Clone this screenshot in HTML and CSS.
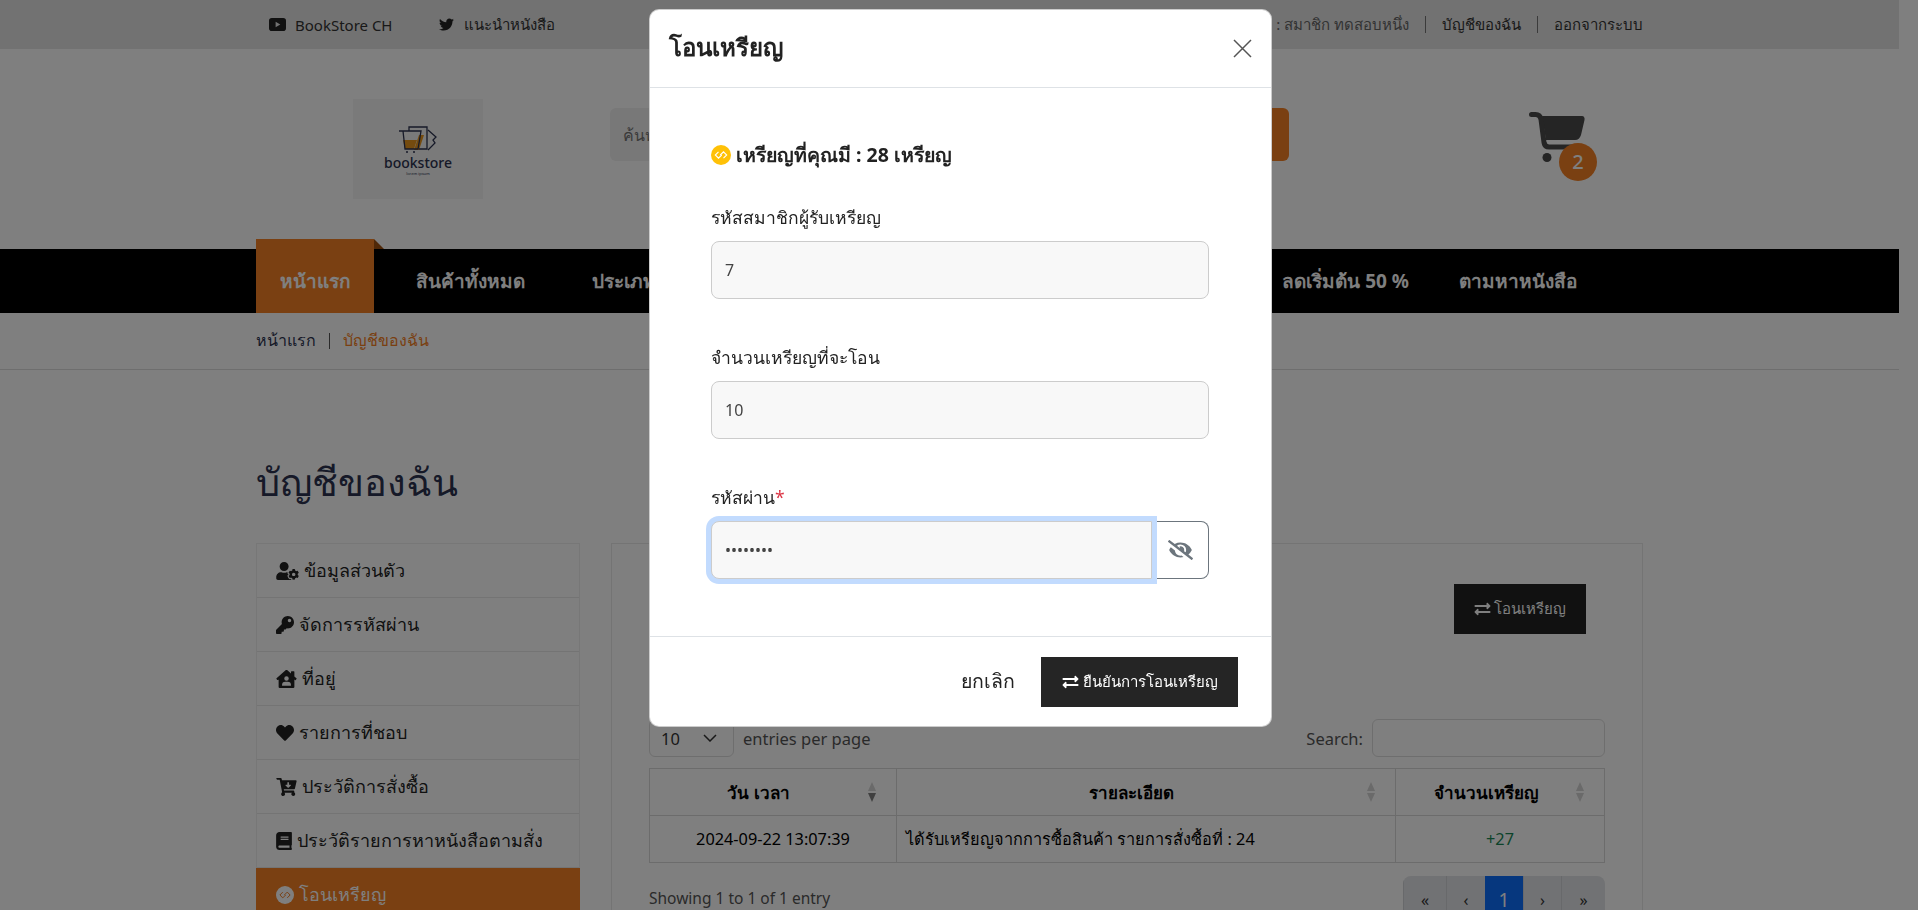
FILE: index.html
```html
<!DOCTYPE html>
<html lang="th">
<head>
    <meta charset="UTF-8">
    <meta name="viewport" content="width=device-width, initial-scale=1.0">
    <title>บัญชีของฉัน</title>
    <link rel="stylesheet" href="styles.css">
</head>
<body>
    <svg class="icon-defs" aria-hidden="true">
        <symbol id="i-exchange" viewBox="0 0 512 512"><path d="M0 168v-16c0-13 11-24 24-24h360V80c0-21 26-32 41-17l80 80c9 9 9 25 0 34l-80 80c-15 15-41 4-41-17v-48H24c-13 0-24-11-24-24zm488 152H128v-48c0-21-26-32-41-17L7 335c-9 9-9 25 0 34l80 80c15 15 41 5 41-17v-48h360c13 0 24-11 24-24v-16c0-13-11-24-24-24z"/></symbol>
        <symbol id="i-coin" viewBox="0 0 20 20"><circle cx="10" cy="10" r="10" fill="currentColor"/><path d="M7.500 6.800 4.300 10l3.200 3.200 3.200-3.200M12.500 13.200 15.700 10l-3.200-3.200L9.300 10" fill="none" stroke="var(--coin-mark)" stroke-width="1.100"/></symbol>
    </svg>

    <div class="page">
        <div class="topbar">
            <div class="container topbar-inner">
                <a class="top-link">
                    <svg class="top-icon" viewBox="0 0 18 14"><path d="M3 0h12a3 3 0 0 1 3 3v8a3 3 0 0 1-3 3H3a3 3 0 0 1-3-3V3a3 3 0 0 1 3-3zm4 4v6l5-3z" fill-rule="evenodd"/></svg>
                    BookStore CH
                </a>
                <a class="top-link top-link-tw">
                    <svg class="top-icon" viewBox="0 0 512 512"><path d="M459 152c0 5 0 9 0 14 0 139-106 299-299 299-59 0-115-17-161-47 8 1 16 1 25 1 49 0 94-17 130-45-46-1-85-31-98-73 7 1 13 2 20 2 9 0 19-1 28-4-48-10-84-52-84-103v-1c14 8 30 13 47 13-28-19-47-51-47-87 0-19 5-37 14-53 52 64 129 105 216 110-2-8-3-16-3-24 0-58 47-105 105-105 30 0 57 13 77 33 24-5 46-14 67-26-8 24-25 45-46 58 21-2 41-8 60-16-14 21-32 39-52 54z"/></svg>
                    แนะนำหนังสือ
                </a>
                <div class="top-right">
                    <span class="top-member">สวัสดี : สมาชิก ทดสอบหนึ่ง</span>
                    <a class="top-sep">บัญชีของฉัน</a>
                    <a class="top-sep">ออกจากระบบ</a>
                </div>
            </div>
        </div>

        <header class="site-header">
            <div class="container header-inner">
                <div class="logo">
                    <svg class="logo-mark" viewBox="0 0 38 27">
                        <path d="M4 14h14l-3 9H6z" fill="#e8971f"/>
                        <path d="M20 9h5l-5 15h-5z" fill="#e8971f"/>
                        <path d="M10 5V1h18v22H20" fill="none" stroke="#2c3350" stroke-width="1.300"/>
                        <path d="M29 4l8 7-3 3 2 3-7 7" fill="none" stroke="#2c3350" stroke-width="1.300"/>
                        <path d="M0 5h22l-3 18H6L4 5" fill="none" stroke="#2c3350" stroke-width="1.300"/>
                        <circle cx="8" cy="26" r="1" fill="#2c3350"/><circle cx="15" cy="26" r="1" fill="#2c3350"/>
                    </svg>
                    <div class="logo-name">bookstore</div>
                    <div class="logo-tag">lorem ipsum</div>
                </div>
                <div class="search">
                    <input class="search-input" type="text" placeholder="ค้นหาหนังสือ">
                    <button class="search-btn" type="button">ค้นหา</button>
                </div>
                <div class="cart">
                    <svg class="cart-icon" viewBox="0 0 56 50">
                        <path d="M13 4h40c2 0 3 2 2.500 4l-3.500 15c-1 3-3 5-6 5H17z"/>
                        <path d="M2.500 2.500h4c3 0 5 2 5.500 5l3 23c.5 3 2 4.500 5 4.500h26" fill="none" stroke="currentColor" stroke-width="5" stroke-linecap="round"/>
                        <circle cx="18" cy="45.500" r="4.500"/>
                    </svg>
                    <span class="cart-count">2</span>
                </div>
            </div>
        </header>

        <nav class="main-nav">
            <div class="container nav-inner">
                <a class="nav-item nav-active">หน้าแรก</a>
                <a class="nav-item">สินค้าทั้งหมด</a>
                <a class="nav-item">ประเภทหนังสือ</a>
                <a class="nav-item nav-end nav-push">ลดเริ่มต้น 50 %</a>
                <a class="nav-item nav-end">ตามหาหนังสือ</a>
            </div>
        </nav>

        <div class="breadcrumb">
            <div class="container crumbs">
                <a>หน้าแรก</a>
                <span class="crumb-bar"></span>
                <a class="crumb-current">บัญชีของฉัน</a>
            </div>
        </div>

        <main class="container account">
            <h1 class="account-title">บัญชีของฉัน</h1>
            <div class="account-body">
                <ul class="side-menu">
                    <li><svg class="side-icon icon-user" viewBox="0 0 640 512"><path d="M610.500 373.300c2.600-14.100 2.600-28.500 0-42.600l25.800-14.900c3-1.700 4.300-5.200 3.300-8.500-6.700-21.600-18.200-41.200-33.200-57.400-2.300-2.500-6-3.100-9-1.400l-25.800 14.900c-10.900-9.300-23.400-16.500-36.900-21.300v-29.800c0-3.400-2.400-6.400-5.700-7.100-22.300-5-45-4.800-66.200 0-3.300.7-5.700 3.700-5.700 7.100v29.800c-13.500 4.800-26 12-36.900 21.300l-25.800-14.900c-2.900-1.700-6.700-1.100-9 1.400-15 16.200-26.500 35.800-33.200 57.400-1 3.300.4 6.800 3.300 8.500l25.800 14.900c-2.600 14.100-2.600 28.500 0 42.600l-25.800 14.900c-3 1.700-4.300 5.200-3.300 8.500 6.700 21.600 18.200 41.100 33.200 57.400 2.300 2.500 6 3.100 9 1.400l25.800-14.900c10.900 9.300 23.400 16.500 36.900 21.300v29.800c0 3.400 2.400 6.400 5.700 7.100 22.300 5 45 4.800 66.200 0 3.300-.7 5.700-3.700 5.700-7.100v-29.800c13.500-4.800 26-12 36.900-21.300l25.800 14.900c2.900 1.700 6.700 1.100 9-1.400 15-16.200 26.500-35.800 33.200-57.400 1-3.300-.4-6.800-3.300-8.500l-25.800-14.900zM496 400.500c-26.800 0-48.500-21.800-48.500-48.500s21.800-48.500 48.500-48.500 48.500 21.800 48.500 48.500-21.700 48.500-48.500 48.500zM224 256c70.700 0 128-57.300 128-128S294.700 0 224 0 96 57.300 96 128s57.300 128 128 128zm201.200 226.500c-2.300-1.200-4.600-2.600-6.800-3.900l-7.900 4.600c-6 3.400-12.800 5.300-19.600 5.300-10.900 0-21.400-4.600-28.900-12.600-18.300-19.800-32.300-43.900-40.200-69.600-5.500-17.700 1.900-36.400 17.900-45.700l7.900-4.600c-.1-2.600-.1-5.200 0-7.800l-7.900-4.600c-16-9.200-23.400-28-17.900-45.700.9-2.900 2.200-5.800 3.200-8.700-3.800-.3-7.500-1.200-11.400-1.200h-16.700c-22.200 10.200-46.900 16-72.900 16s-50.600-5.800-72.900-16h-16.700C60.200 288 0 348.200 0 422.400V464c0 26.500 21.500 48 48 48h352c10.100 0 19.500-3.200 27.200-8.500-1.200-3.800-2-7.700-2-11.800v-9.200z"/></svg>ข้อมูลส่วนตัว</li>
                    <li><svg class="side-icon icon-square" viewBox="0 0 512 512"><path d="M512 176c0 97.200-78.800 176-176 176-11.200 0-22.200-1.100-32.800-3.100l-24 27A24 24 0 0 1 261.200 384H224v40c0 13.300-10.700 24-24 24h-40v40c0 13.300-10.700 24-24 24H24c-13.300 0-24-10.700-24-24v-78.100c0-6.400 2.500-12.500 7-17l161.800-161.800C163.100 213.800 160 195.300 160 176 160 78.800 238.800 0 336 0c97.500 0 176 78.500 176 176zM336 128c0 26.500 21.500 48 48 48s48-21.500 48-48-21.500-48-48-48-48 21.500-48 48z"/></svg>จัดการรหัสผ่าน</li>
                    <li><svg class="side-icon icon-house" viewBox="0 0 576 512"><path d="M570.700 236.300 512 184.400V48a16 16 0 0 0-16-16h-64a16 16 0 0 0-16 16v51.700L314.800 10.300C308.500 4.600 296.500 0 288 0s-20.500 4.600-26.700 10.300L5.300 236.300A16.200 16.200 0 0 0 0 248a18 18 0 0 0 4.100 10.700l21.400 23.800a21 21 0 0 0 12 5.300 21.700 21.700 0 0 0 10.700-4.100l15.900-14V480a32 32 0 0 0 32 32H480a32 32 0 0 0 32-32V269.900l15.900 14a22 22 0 0 0 10.700 4.100 21 21 0 0 0 11.900-5.300l21.400-23.800A21.600 21.600 0 0 0 576 248a21.700 21.700 0 0 0-5.300-11.700zM288 176a64 64 0 1 1-64 64 64 64 0 0 1 64-64zm112 272H176a16 16 0 0 1-16-16 96 96 0 0 1 96-96h64a96 96 0 0 1 96 96 16 16 0 0 1-16 16z"/></svg>ที่อยู่</li>
                    <li><svg class="side-icon icon-square" viewBox="0 0 512 512"><path d="M462.300 62.600C407.500 15.900 326 24.300 275.700 76.200L256 96.500l-19.700-20.300C186.100 24.300 104.500 15.900 49.700 62.600c-62.800 53.600-66.100 149.800-9.900 207.900l193.500 199.800c12.500 12.900 32.800 12.900 45.300 0l193.500-199.800c56.300-58.100 53-154.300-9.800-207.900z"/></svg>รายการที่ชอบ</li>
                    <li><svg class="side-icon icon-cart" viewBox="0 0 576 512"><path d="M504.700 320H211.600l6.500 32h268.400c15.400 0 26.800 14.300 23.400 29.300l-5.500 24.300C523.100 414.700 536 433.800 536 456c0 31.200-25.500 56.600-56.800 56-29.800-.5-54.300-24.700-55.100-54.400-.5-16.300 6-31 16.800-41.600H231.100c10.400 10.300 16.900 24.500 16.900 40 0 31.800-26.500 57.400-58.700 55.900-28.500-1.300-51.700-24.400-53.200-52.900-1.200-22 10.400-41.400 28-51.600L94.400 48H24C10.700 48 0 37.300 0 24V8C0 3.600 10.700 0 24 0h102.500c11.400 0 21.200 8 23.500 19.200L159.200 64H552c15.400 0 26.800 14.300 23.400 29.300l-47.300 208c-2.500 10.900-12.200 18.700-23.400 18.700zM403 192h-43v-60c0-6.600-5.400-12-12-12h-24c-6.600 0-12 5.400-12 12v60h-43c-10.700 0-16 12.900-8.500 20.500l67 67c4.700 4.700 12.300 4.700 17 0l67-67c7.600-7.600 2.200-20.500-8.500-20.500z"/></svg>ประวัติการสั่งซื้อ</li>
                    <li><svg class="side-icon icon-book" viewBox="0 0 448 512"><path d="M448 360V24c0-13.300-10.700-24-24-24H96C43 0 0 43 0 96v320c0 53 43 96 96 96h328c13.300 0 24-10.700 24-24v-16c0-7.500-3.500-14.300-8.900-18.700-4.200-15.400-4.200-59.300 0-74.700 5.400-4.300 8.900-11.100 8.900-18.600zM128 134c0-3.300 2.700-6 6-6h212c3.300 0 6 2.700 6 6v20c0 3.300-2.700 6-6 6H134c-3.300 0-6-2.700-6-6v-20zm0 64c0-3.300 2.700-6 6-6h212c3.300 0 6 2.700 6 6v20c0 3.300-2.700 6-6 6H134c-3.300 0-6-2.700-6-6v-20zm253.400 250H96c-17.700 0-32-14.300-32-32 0-17.600 14.400-32 32-32h285.400c-1.900 17.100-1.900 46.900 0 64z"/></svg>ประวัติรายการหาหนังสือตามสั่ง</li>
                    <li class="side-active"><svg class="side-icon icon-square side-coin"><use href="#i-coin"/></svg>โอนเหรียญ</li>
                </ul>

                <section class="card">
                    <div class="card-actions">
                        <button class="dark-btn" type="button"><svg class="btn-icon"><use href="#i-exchange"/></svg>โอนเหรียญ</button>
                    </div>
                    <div class="dt-top">
                        <div class="dt-length">
                            <span class="dt-select">10<svg class="dt-chevron" viewBox="0 0 14 8"><path d="M1 1l6 6 6-6" fill="none" stroke="currentColor" stroke-width="1.500"/></svg></span>
                            <span>entries per page</span>
                        </div>
                        <div class="dt-search">
                            <span>Search:</span>
                            <span class="dt-search-box"></span>
                        </div>
                    </div>
                    <table class="dt-table">
                        <thead>
                            <tr>
                                <th class="col-date">วัน เวลา<span class="sort sort-down"></span></th>
                                <th>รายละเอียด<span class="sort"></span></th>
                                <th class="col-coin">จำนวนเหรียญ<span class="sort"></span></th>
                            </tr>
                        </thead>
                        <tbody>
                            <tr>
                                <td class="cell-center">2024-09-22 13:07:39</td>
                                <td>ได้รับเหรียญจากการซื้อสินค้า รายการสั่งซื้อที่ : 24</td>
                                <td class="cell-center cell-plus">+27</td>
                            </tr>
                        </tbody>
                    </table>
                    <div class="dt-bottom">
                        <span class="dt-info">Showing 1 to 1 of 1 entry</span>
                        <div class="pager">
                            <a>«</a><a>‹</a><a class="pager-on">1</a><a>›</a><a>»</a>
                        </div>
                    </div>
                </section>
            </div>
        </main>
    </div>

    <div class="backdrop"></div>

    <div class="modal">
        <div class="modal-head">
            <h2 class="modal-title">โอนเหรียญ</h2>
            <svg class="modal-close" viewBox="0 0 19 19"><path d="M1 1l17 17M18 1 1 18" fill="none" stroke="currentColor" stroke-width="1.500"/></svg>
        </div>
        <div class="modal-body">
            <p class="coin-line"><svg class="coin-icon"><use href="#i-coin"/></svg>เหรียญที่คุณมี : 28 เหรียญ</p>
            <label class="field-label">รหัสสมาชิกผู้รับเหรียญ</label>
            <input class="field-input" type="text" value="7">
            <label class="field-label">จำนวนเหรียญที่จะโอน</label>
            <input class="field-input" type="text" value="10">
            <label class="field-label">รหัสผ่าน<span class="req">*</span></label>
            <div class="pass-group">
                <input class="field-input pass-input" type="password" value="12345678">
                <span class="pass-eye">
                    <svg viewBox="0 0 640 512"><path d="M320 400c-75.850 0-137.250-58.710-142.900-133.110L72.200 185.820c-13.790 17.300-26.480 35.590-36.720 55.590a32.350 32.350 0 0 0 0 29.190C89.710 376.410 197.070 448 320 448c26.910 0 52.870-4 77.890-10.460L346 397.390a144.130 144.130 0 0 1-26 2.610zm313.820 58.100l-110.550-85.440a331.250 331.250 0 0 0 81.250-102.070 32.350 32.350 0 0 0 0-29.190C550.290 135.590 442.930 64 320 64a308.150 308.150 0 0 0-147.320 37.700L45.460 3.370A16 16 0 0 0 23 6.180L3.370 31.450A16 16 0 0 0 6.180 53.900l588.360 454.730a16 16 0 0 0 22.460-2.810l19.640-25.270a16 16 0 0 0-2.820-22.450zm-183.720-142l-39.300-30.380A94.750 94.750 0 0 0 416 256a94.760 94.760 0 0 0-121.310-92.210A47.650 47.650 0 0 1 304 192a46.640 46.640 0 0 1-1.540 10l-73.610-56.890A142.310 142.310 0 0 1 320 112a143.920 143.920 0 0 1 144 144c0 21.630-5.290 41.790-13.900 60.110z"/></svg>
                </span>
            </div>
        </div>
        <div class="modal-foot">
            <button class="cancel-btn" type="button">ยกเลิก</button>
            <button class="confirm-btn" type="button"><svg class="btn-icon"><use href="#i-exchange"/></svg>ยืนยันการโอนเหรียญ</button>
        </div>
    </div>
</body>
</html>
```

FILE: styles.css
```css
* {
    box-sizing: border-box;
}
html, body {
    height: 100%;
    overflow: hidden;
}
body {
    margin: 0;
    font-family: "Noto Sans", "Open Sans", sans-serif;
    font-size: 16px;
    color: #222;
    background: #fff;
}
a {
    color: inherit;
    text-decoration: none;
}
.icon-defs {
    display: none;
}
.page {
    width: 1899px;
}
.container {
    width: 1387px;
    margin: 0 auto;
}

/* top bar */
.topbar {
    height: 49px;
    background: #e4e4e4;
}
.topbar-inner {
    display: flex;
    align-items: center;
    height: 100%;
    padding-left: 13px;
}
.top-link {
    display: flex;
    align-items: center;
    gap: 9px;
    font-size: 15px;
    color: #333;
}
.top-link-tw {
    margin-left: 45px;
}
.top-icon {
    width: 17px;
    height: 15px;
    fill: #222;
}
.top-right {
    margin-left: auto;
    display: flex;
    align-items: center;
    font-size: 15px;
    color: #333;
}
.top-member {
    color: #666;
}
.top-sep {
    margin-left: 16px;
    padding-left: 16px;
    border-left: 1px solid #777;
    line-height: 17px;
}

/* logo, search, cart */
.header-inner {
    display: flex;
    height: 200px;
    padding-left: 97px;
    padding-top: 50px;
}
.logo {
    width: 130px;
    height: 100px;
    background: #f4f4f4;
    display: flex;
    flex-direction: column;
    align-items: center;
    padding-top: 27px;
}
.logo-mark {
    width: 38px;
    height: 27px;
}
.logo-name {
    margin-top: 2px;
    font-size: 14px;
    font-weight: 500;
    line-height: 16px;
    color: #2c3350;
}
.logo-tag {
    font-size: 4px;
    line-height: 5px;
    color: #2c3350;
}
.search {
    display: flex;
    width: 679px;
    height: 53px;
    margin-left: 127px;
    margin-top: 9px;
}
.search-input {
    flex: 1;
    border: none;
    border-radius: 6px 0 0 6px;
    background: #f0f0f0;
    padding-left: 13px;
    font: inherit;
}
.search-btn {
    width: 110px;
    border: none;
    border-radius: 0 6px 6px 0;
    background: #f48024;
    color: #fff;
}
.cart {
    position: relative;
    margin-left: 240px;
    margin-top: 13px;
    width: 60px;
    height: 60px;
    color: #4a4a4a;
}
.cart-icon {
    display: block;
    width: 56px;
    height: 50px;
    fill: currentColor;
}
.cart-count {
    position: absolute;
    left: 30px;
    top: 31px;
    width: 38px;
    height: 38px;
    border-radius: 50%;
    background: #f48024;
    color: #fff;
    font-size: 20px;
    font-weight: 500;
    text-align: center;
    line-height: 38px;
}

/* main nav */
.main-nav {
    height: 64px;
    background: #000;
}
.nav-inner {
    display: flex;
    height: 100%;
    padding-right: 41px;
}
.nav-item {
    display: flex;
    align-items: center;
    padding: 0 25px 0 42px;
    font-size: 19px;
    font-weight: 700;
    color: #fff;
}
.nav-end {
    padding: 0 25px;
}
.nav-active {
    position: relative;
    width: 118px;
    height: 74px;
    margin-top: -10px;
    padding: 10px 0 0;
    justify-content: center;
    background: #f48024;
}
.nav-active::after {
    content: "";
    position: absolute;
    left: 100%;
    top: 0;
    border-top: 10px solid transparent;
    border-left: 10px solid #9e5010;
}
.nav-push {
    margin-left: auto;
}

/* breadcrumb */
.breadcrumb {
    height: 57px;
    border-bottom: 1px solid #dcdcdc;
}
.crumbs {
    display: flex;
    align-items: center;
    height: 55px;
    font-size: 16px;
    color: #2c3350;
}
.crumb-bar {
    width: 1px;
    height: 16px;
    margin: 0 13px;
    background: #555;
}
.crumb-current {
    color: #f48024;
}

/* account */
.account-title {
    margin: 0;
    padding-top: 81px;
    height: 173px;
    font-size: 38px;
    font-weight: 400;
    line-height: 60px;
    color: #2c3350;
}
.account-body {
    display: flex;
    gap: 31px;
}
.side-menu {
    width: 324px;
    margin: 0;
    padding: 0;
    list-style: none;
    border: 1px solid #eee;
    border-bottom: none;
}
.side-menu li {
    display: flex;
    align-items: center;
    gap: 5px;
    height: 54px;
    padding-left: 19px;
    border-bottom: 1px solid #e8e8e8;
    font-size: 18px;
    color: #222;
}
.side-icon {
    height: 18px;
    fill: currentColor;
}
.icon-user {
    width: 23px;
}
.icon-square {
    width: 18px;
}
.icon-house, .icon-cart {
    width: 21px;
}
.icon-book {
    width: 16px;
}
.side-menu .side-active {
    margin: 0 -1px;
    padding-left: 20px;
    background: #f48024;
    color: #fff;
}
.side-coin {
    --coin-mark: #f48024;
    color: #fff;
}
.card {
    width: 1032px;
    height: 500px;
    border: 1px solid #e8e8e8;
    padding: 0 37px;
}
.card-actions {
    display: flex;
    justify-content: flex-end;
    padding: 40px 19px 0 0;
    height: 175px;
}
.dark-btn {
    display: flex;
    align-items: center;
    justify-content: center;
    gap: 3px;
    width: 132px;
    height: 50px;
    border: none;
    background: #222;
    color: #fff;
    font: inherit;
    font-size: 15px;
}
.btn-icon {
    width: 17px;
    height: 16px;
    fill: currentColor;
}
.dt-top {
    display: flex;
    justify-content: space-between;
    align-items: center;
    height: 38px;
    margin-bottom: 11px;
    color: #555;
    font-size: 16.500px;
}
.dt-length, .dt-search {
    display: flex;
    align-items: center;
    gap: 9px;
}
.dt-select {
    display: flex;
    align-items: center;
    justify-content: space-between;
    width: 85px;
    height: 38px;
    padding: 0 16px 0 11px;
    border: 1px solid #ddd;
    border-radius: 6px;
    color: #333;
}
.dt-chevron {
    width: 14px;
    height: 8px;
}
.dt-search-box {
    width: 233px;
    height: 38px;
    border: 1px solid #ddd;
    border-radius: 6px;
}
.dt-table {
    width: 956px;
    border-collapse: collapse;
    font-size: 16.300px;
}
.dt-table th, .dt-table td {
    border: 1px solid #d8d8d8;
    height: 47px;
    padding: 0 9px;
    color: #000;
}
.dt-table th {
    position: relative;
    padding-right: 38px;
    font-size: 17px;
}
.col-date {
    width: 247px;
}
.col-coin {
    width: 209px;
}
.cell-center {
    text-align: center;
}
.dt-table .cell-plus {
    color: #198754;
}
.sort {
    position: absolute;
    right: 20px;
    top: 13px;
    border: 4.500px solid transparent;
    border-top: none;
    border-bottom: 9px solid #d4d4d4;
}
.sort::after {
    content: "";
    position: absolute;
    left: -4.500px;
    top: 11px;
    border: 4.500px solid transparent;
    border-bottom: none;
    border-top: 9px solid #d4d4d4;
}
.sort-down::after {
    border-top-color: #808080;
}
.dt-bottom {
    display: flex;
    justify-content: space-between;
    margin-top: 13px;
    color: #555;
    font-size: 15.500px;
}
.dt-info {
    padding-top: 11px;
}
.pager {
    display: grid;
    grid-template-columns: 43px 39px 38px 38px 44px;
    height: 48px;
    border-radius: 8px;
    overflow: hidden;
    background: #e2e4e8;
    font-size: 16px;
    color: #333;
}
.pager a {
    display: flex;
    align-items: center;
    justify-content: center;
    border-left: 1px solid #d0d2d6;
}
.pager .pager-on {
    background: #0d6efd;
    border: none;
    color: #fff;
    font-size: 19px;
}

/* modal */
.backdrop {
    position: fixed;
    inset: 0;
    background: rgba(0, 0, 0, 0.5);
}
.modal {
    position: fixed;
    left: 649px;
    top: 9px;
    width: 623px;
    height: 718px;
    background: #fff;
    border: 1px solid rgba(0, 0, 0, 0.2);
    border-radius: 10px;
    display: flex;
    flex-direction: column;
    --coin-mark: #fff;
}
.modal-head {
    display: flex;
    align-items: center;
    justify-content: space-between;
    height: 78px;
    padding: 0 19px;
    border-bottom: 1px solid #dee2e6;
}
.modal-title {
    margin: 0 0 3px;
    font-size: 24px;
    font-weight: 700;
    color: #222;
}
.modal-close {
    width: 19px;
    height: 19px;
    color: #555;
}
.modal-body {
    flex: 1;
    padding: 0 62px 0 61px;
}
.coin-line {
    display: flex;
    align-items: center;
    gap: 5px;
    height: 20px;
    margin: 57px 0 39px;
    font-size: 19.500px;
    font-weight: 700;
    color: #222;
}
.coin-icon {
    width: 20px;
    height: 20px;
    color: #ffc107;
}
.field-label {
    display: block;
    height: 28px;
    margin-bottom: 9px;
    font-size: 17.500px;
    line-height: 26px;
    color: #222;
}
.field-input {
    display: block;
    width: 100%;
    height: 58px;
    margin-bottom: 45px;
    padding: 0 13px;
    border: 1px solid #ccc;
    border-radius: 8px;
    background: #f8f8f8;
    font: inherit;
    font-size: 16px;
    color: #444;
}
.req {
    color: #dc3545;
}
.pass-group {
    display: flex;
}
.pass-input {
    flex: 1;
    margin-bottom: 0;
    border-radius: 8px 0 0 8px;
    box-shadow: 0 0 0 5px #c2dbfe;
    position: relative;
}
.pass-eye {
    display: flex;
    align-items: center;
    justify-content: center;
    width: 57px;
    height: 58px;
    border: 1px solid #6c757d;
    border-left: none;
    border-radius: 0 8px 8px 0;
    color: #6c757d;
}
.pass-eye svg {
    width: 25px;
    height: 20px;
    fill: currentColor;
}
.modal-foot {
    display: flex;
    align-items: center;
    justify-content: flex-end;
    height: 90px;
    padding: 0 33px 0 0;
    border-top: 1px solid #dee2e6;
}
.cancel-btn {
    border: none;
    background: none;
    padding: 0;
    margin-right: 26px;
    font: inherit;
    font-size: 19.500px;
    color: #222;
}
.confirm-btn {
    display: flex;
    align-items: center;
    justify-content: center;
    gap: 4px;
    width: 197px;
    height: 50px;
    border: none;
    background: #252525;
    color: #fff;
    font: inherit;
    font-size: 15px;
    font-weight: 500;
}
```
